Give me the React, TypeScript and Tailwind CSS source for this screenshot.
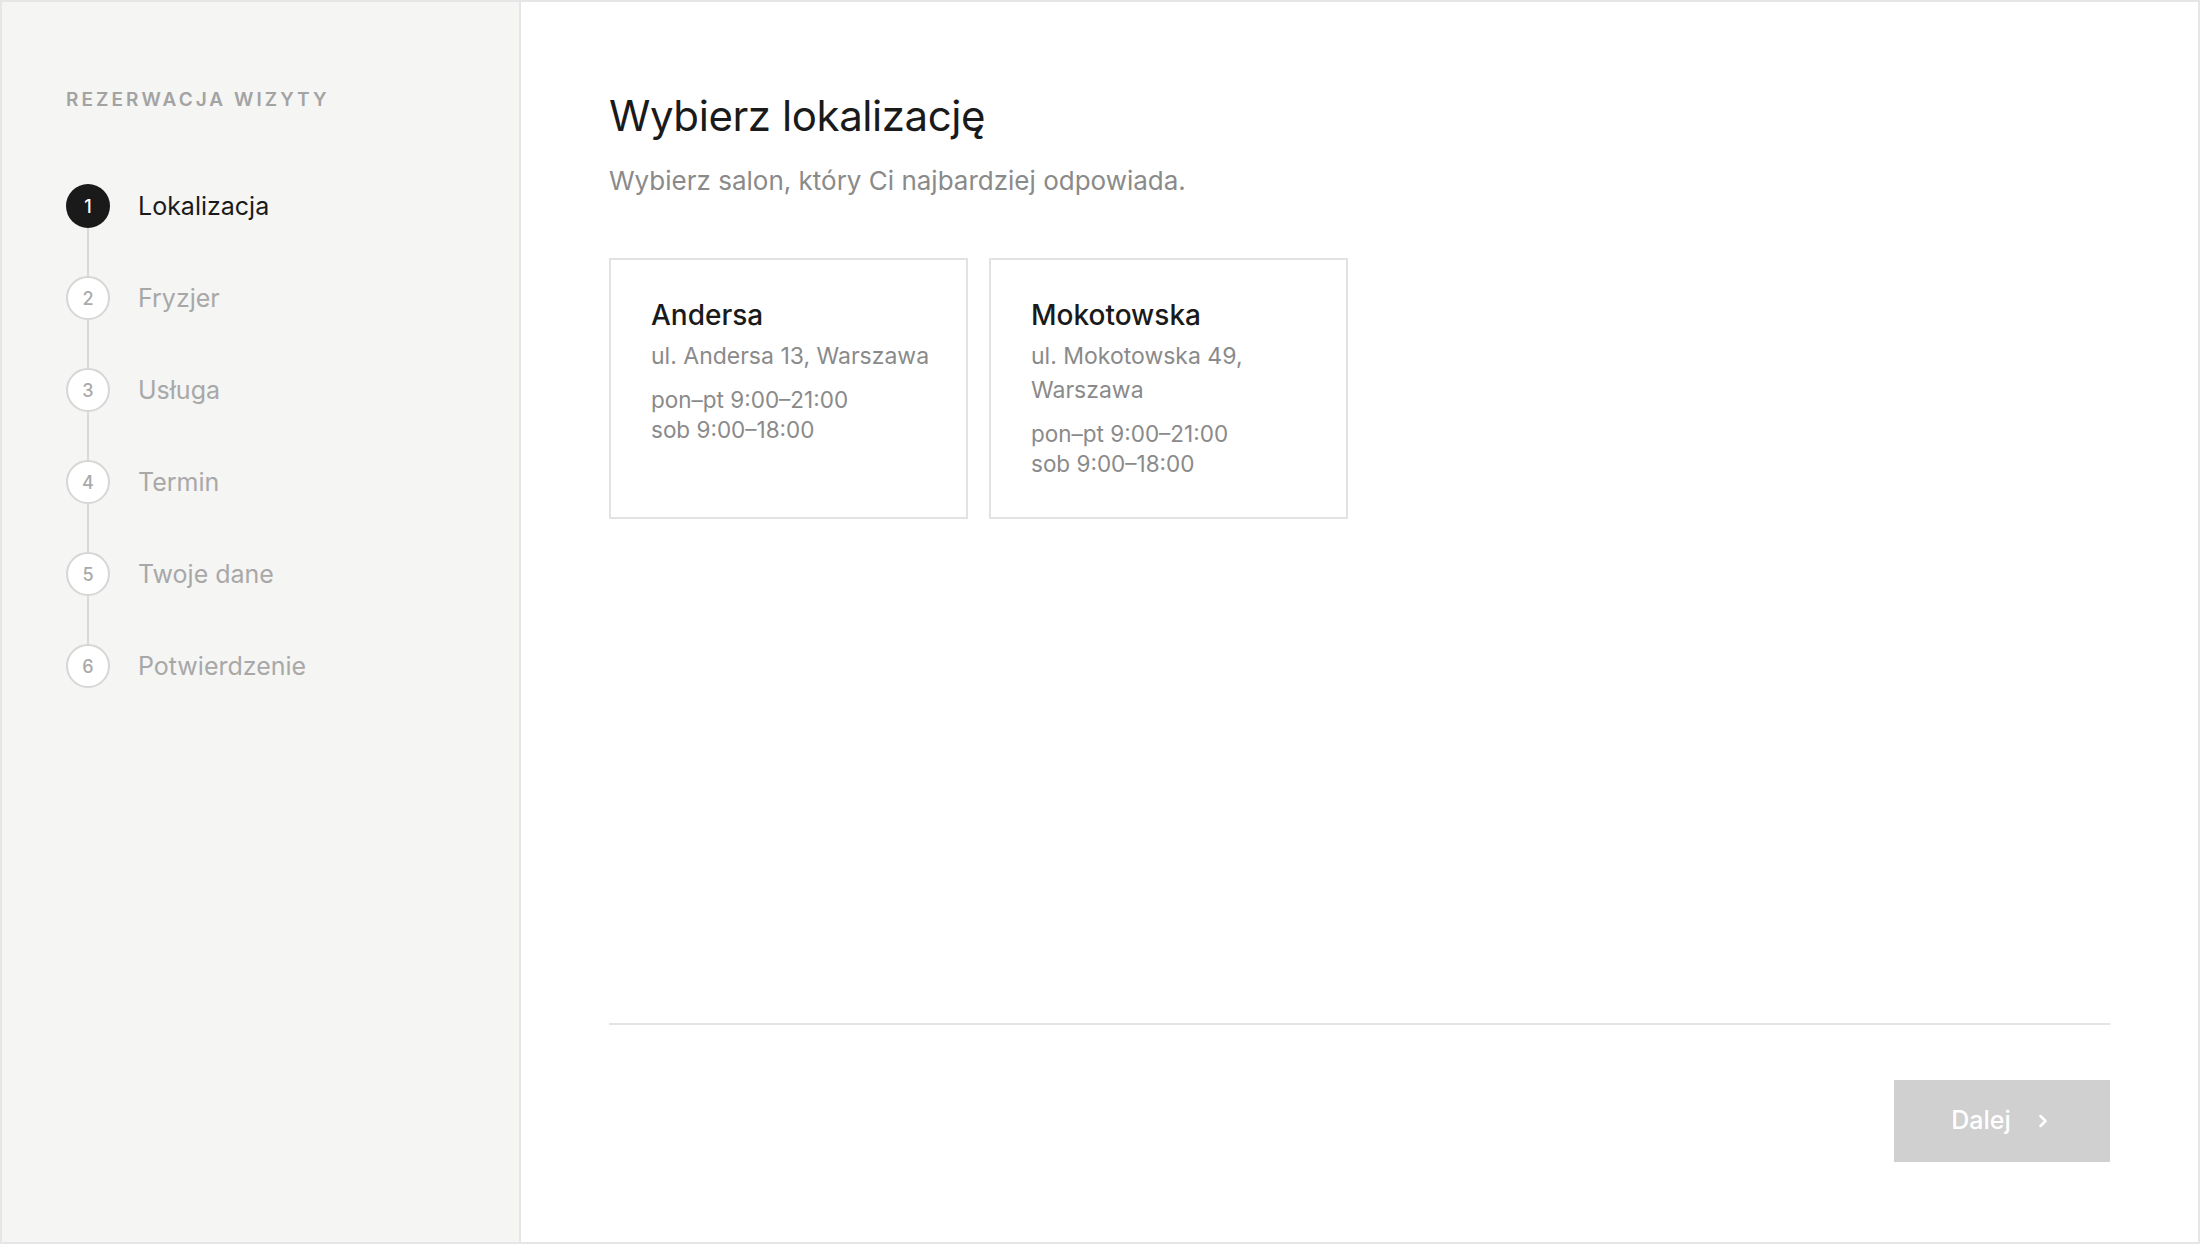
import { ChevronRight } from "lucide-react";

const kroki = ["Lokalizacja", "Fryzjer", "Usługa", "Termin", "Twoje dane", "Potwierdzenie"];

const salony = [
  {
    nazwa: "Andersa",
    adres: "ul. Andersa 13, Warszawa",
    godziny: ["pon–pt 9:00–21:00", "sob 9:00–18:00"],
  },
  {
    nazwa: "Mokotowska",
    adres: "ul. Mokotowska 49, Warszawa",
    godziny: ["pon–pt 9:00–21:00", "sob 9:00–18:00"],
  },
];

export default function App() {
  const aktywny = 0;

  return (
    <div
      className="flex h-[1244px] w-[2200px] border-2 border-[#e6e6e6] bg-white"
      style={{ fontFamily: "Inter, 'Noto Sans', sans-serif" }}
    >
      <aside className="w-[519px] shrink-0 border-r-2 border-[#e6e6e6] bg-[#f5f5f4] pl-[64px] pt-[84px]">
        <p className="text-[19px] font-semibold leading-[28px] tracking-[0.16em] text-[#a3a3a3]">
          REZERWACJA WIZYTY
        </p>

        <ol className="mt-[70px]">
          {kroki.map((k, i) => (
            <li key={k} className="flex flex-col">
              <div className="flex items-center gap-[28px]">
                <div
                  className={`flex h-[44px] w-[44px] shrink-0 items-center justify-center rounded-full text-[18px] font-medium ${
                    i === aktywny
                      ? "bg-[#1a1a1a] text-white"
                      : "border-2 border-[#d6d6d6] bg-white text-[#aaaaaa]"
                  }`}
                >
                  {i + 1}
                </div>
                <span
                  className={`text-[25px] leading-[32px] ${
                    i === aktywny ? "text-[#1a1a1a]" : "text-[#a8a8a8]"
                  }`}
                >
                  {k}
                </span>
              </div>
              {i < kroki.length - 1 && <div className="ml-[21px] h-[48px] w-[2px] bg-[#d9d9d9]" />}
            </li>
          ))}
        </ol>
      </aside>

      <main className="flex flex-1 flex-col px-[88px] pb-[80px] pt-[86px]">
        <h1 className="text-[42px] font-normal leading-[56px] tracking-[-0.01em] text-[#1a1a1a]">
          Wybierz lokalizację
        </h1>
        <p className="mt-[19px] text-[26px] leading-[36px] text-[#8a8a8a]">
          Wybierz salon, który Ci najbardziej odpowiada.
        </p>

        <div className="mt-[59px] flex gap-[21px]">
          {salony.map((s) => (
            <div
              key={s.nazwa}
              className="h-[261px] w-[359px] border-2 border-[#e2e2e2] bg-white pl-[40px] pr-[24px] pt-[36px]"
            >
              <h2 className="text-[28px] font-medium leading-[38px] text-[#1a1a1a]">{s.nazwa}</h2>
              <p className="mt-[5px] text-[23px] leading-[34px] text-[#8a8a8a]">{s.adres}</p>
              <div className="mt-[12px] text-[22.5px] leading-[30px] text-[#8a8a8a]">
                {s.godziny.map((g) => (
                  <p key={g}>{g}</p>
                ))}
              </div>
            </div>
          ))}
        </div>

        <div className="mt-auto">
          <div className="h-[2px] bg-[#e4e4e4]" />
          <div className="mt-[55px] flex justify-end">
            <button className="flex h-[82px] w-[216px] items-center justify-center gap-[22px] bg-[#d0d0d0] text-[25px] font-medium text-white">
              Dalej
              <ChevronRight size={20} strokeWidth={3} />
            </button>
          </div>
        </div>
      </main>
    </div>
  );
}
